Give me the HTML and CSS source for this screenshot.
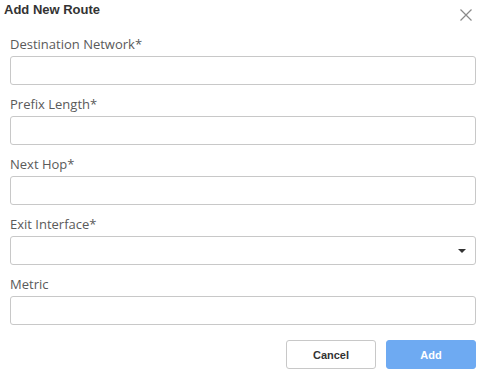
FILE: index.html
```html
<!DOCTYPE html>
<html>
<head>
<meta charset="utf-8">
<link rel="stylesheet" href="styles.css">
</head>
<body>
<div class="modal">
  <div class="header">
    <h1 class="title">Add New Route</h1>
    <button class="close" aria-label="Close">
      <svg width="12" height="12" viewBox="0 0 12 12"><path d="M0.5 0.5 L11.5 11.5 M11.5 0.5 L0.5 11.5" stroke="#8a8a8a" stroke-width="1.2" fill="none"/></svg>
    </button>
  </div>
  <form class="form">
    <div class="field">
      <label class="label">Destination Network*</label>
      <input class="input" type="text">
    </div>
    <div class="field">
      <label class="label">Prefix Length*</label>
      <input class="input" type="text">
    </div>
    <div class="field">
      <label class="label">Next Hop*</label>
      <input class="input" type="text">
    </div>
    <div class="field">
      <label class="label">Exit Interface*</label>
      <div class="select">
        <span class="caret"></span>
      </div>
    </div>
    <div class="field">
      <label class="label">Metric</label>
      <input class="input" type="text">
    </div>
    <div class="actions">
      <button type="button" class="btn btn-cancel">Cancel</button>
      <button type="button" class="btn btn-add">Add</button>
    </div>
  </form>
</div>
</body>
</html>
```

FILE: styles.css
```css
* { box-sizing: border-box; }
html, body { margin: 0; padding: 0; background: #fff; }
body { font-family: "Open Sans", "Liberation Sans", Arial, sans-serif; color: #333; width: 480px; height: 376px; overflow: hidden; }
.modal { padding: 0 4px 0 4px; }
.header { display: flex; justify-content: space-between; align-items: flex-start; height: 36px; }
.title { margin: 0; padding-top: 2px; font-family: "Liberation Sans", Arial, sans-serif; font-size: 13px; font-weight: bold; line-height: 16px; color: #333; }
.close { border: 0; background: none; padding: 0; margin: 9px 4px 0 0; width: 12px; height: 12px; display: block; }
.close svg { display: block; }
.form { padding-left: 6px; }
.field { display: flex; flex-direction: column; margin-bottom: 11px; }
.label { font-size: 13px; line-height: 16px; color: #5a5a5a; margin-bottom: 4px; }
.input, .select { width: 100%; height: 29px; border: 1px solid #c8c8c8; border-radius: 3px; background: #fff; margin: 0; padding: 0 8px; font: inherit; }
.select { display: flex; align-items: center; justify-content: flex-end; padding-right: 9px; }
.caret { width: 0; height: 0; border-left: 4px solid transparent; border-right: 4px solid transparent; border-top: 4px solid #333; }
.actions { display: flex; justify-content: flex-end; gap: 10px; padding-top: 4px; }
.btn { width: 90px; height: 29px; border-radius: 3px; font-family: "Liberation Sans", Arial, sans-serif; font-size: 11px; font-weight: bold; cursor: pointer; }
.btn-cancel { background: #fff; border: 1px solid #c8c8c8; color: #333; }
.btn-add { background: #6eaaf2; border: 1px solid #6eaaf2; color: #fff; }
```
